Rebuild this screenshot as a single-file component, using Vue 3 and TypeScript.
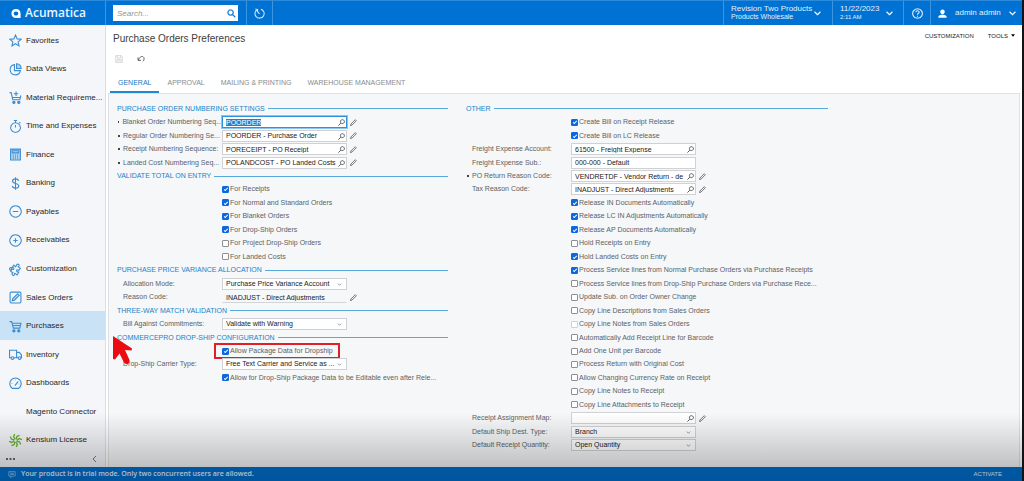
<script setup lang="ts">
import { onMounted, ref } from 'vue'

interface Shape { d: string; fill?: boolean; tint?: boolean }
interface NavItem { label: string; icon: string }
interface Row {
  kind: 'heading' | 'lookup' | 'text' | 'plain' | 'select' | 'check'
  label: string
  value?: string
  required?: boolean
  edit?: boolean
  on?: boolean
  marked?: boolean
  faint?: boolean
  focus?: boolean
}

const icons: Record<string, Shape[]> = {
  star: [{ d: 'M12 2l3 7 7.5.7-5.700 5 1.700 7.300L12 18l-6.500 4 1.700-7.300-5.700-5L9 9z' }],
  pie: [{ d: 'M10 3a9.500 9.500 0 1 0 11 11H10z' }, { d: 'M14 1.500a9 9 0 0 1 8.500 8.500H14z', tint: true }],
  cartPlus: [
    { d: 'M1 3h3l3 13h13l2-8M6 12h15' },
    { d: 'M13 1v8M9 5h8' },
    { d: 'M9 19a2 2 0 1 0 .1 0M18 19a2 2 0 1 0 .1 0', fill: true },
  ],
  watch: [{ d: 'M12 5a9 9 0 1 0 .1 0M12 5V1M9 1h6M12 9v5M19 4l2 2' }],
  calc: [
    { d: 'M3 2h18v20H3z', tint: true },
    { d: 'M6 5h12v4H6zM7 13h2M11 13h2M15 13h2M7 16h2M11 16h2M15 16h2M7 19h2M11 19h2M15 19h2' },
  ],
  dollar: [{ d: 'M18 7c-1-3-3-3.500-6-3.500S6.500 5 6.500 7.500 8 11 12 12s6 2 6 4.500-2.500 4-6 4-5.500-1-6-4M12 .5v23' }],
  minus: [{ d: 'M12 1.500a10.500 10.500 0 1 0 .1 0M7 12h10' }],
  plus: [{ d: 'M12 1.500a10.500 10.500 0 1 0 .1 0' }, { d: 'M12 8v8M8 12h8' }],
  puzzle: [{ d: 'M9 4l3 3c2-1 1-5 4-5s4 4 1 5l4 3-3 4c-1-2-4-2-4 0s2 3 4 3l-3 5-4-3c-2 1 0 4-3 4s-3-4-1-5l-4-3 2-4c2 2 4 1 4-1S7 9 5 9z' }, { d: 'M5 9c-2-1-4 0-4 2s2 3 4 2' }],
  edit: [{ d: 'M4 2h16q2 0 2 2v16q0 2-2 2H4q-2 0-2-2V4q0-2 2-2z' }, { d: 'M6 18l1-4L16 5l3 3-9 9z', tint: true }],
  cart: [
    { d: 'M1 3h4l3 12h12l2-9H6M7 10h14' },
    { d: 'M9 18a2 2 0 1 0 .1 0M18 18a2 2 0 1 0 .1 0', fill: true },
  ],
  truck: [
    { d: 'M4 18H1V4h13v14H9M14 8h5l4 5v5h-1M17 18h-3' },
    { d: 'M6.500 16a2.500 2.500 0 1 0 .1 0M19.500 16a2.500 2.500 0 1 0 .1 0' },
  ],
  gauge: [{ d: 'M6 21a10.500 10.500 0 1 1 12 0zM11 16l6-8M5 12h1M12 5v1M18 13h1' }],
  blank: [],
}

const nav: NavItem[] = [
  { label: 'Favorites', icon: 'star' },
  { label: 'Data Views', icon: 'pie' },
  { label: 'Material Requireme...', icon: 'cartPlus' },
  { label: 'Time and Expenses', icon: 'watch' },
  { label: 'Finance', icon: 'calc' },
  { label: 'Banking', icon: 'dollar' },
  { label: 'Payables', icon: 'minus' },
  { label: 'Receivables', icon: 'plus' },
  { label: 'Customization', icon: 'puzzle' },
  { label: 'Sales Orders', icon: 'edit' },
  { label: 'Purchases', icon: 'cart' },
  { label: 'Inventory', icon: 'truck' },
  { label: 'Dashboards', icon: 'gauge' },
  { label: 'Magento Connector', icon: 'blank' },
  { label: 'Kensium License', icon: 'burst' },
]

const tabs = ['GENERAL', 'APPROVAL', 'MAILING & PRINTING', 'WAREHOUSE MANAGEMENT']

const left: Row[] = [
  { kind: 'heading', label: 'PURCHASE ORDER NUMBERING SETTINGS' },
  { kind: 'lookup', label: 'Blanket Order Numbering Seq...', value: 'POORDER', required: true, edit: true, focus: true },
  { kind: 'lookup', label: 'Regular Order Numbering Se...', value: 'POORDER - Purchase Order', required: true, edit: true },
  { kind: 'lookup', label: 'Receipt Numbering Sequence:', value: 'PORECEIPT - PO Receipt', required: true, edit: true },
  { kind: 'lookup', label: 'Landed Cost Numbering Seq...', value: 'POLANDCOST - PO Landed Costs', required: true, edit: true },
  { kind: 'heading', label: 'VALIDATE TOTAL ON ENTRY' },
  { kind: 'check', label: 'For Receipts', on: true },
  { kind: 'check', label: 'For Normal and Standard Orders', on: true },
  { kind: 'check', label: 'For Blanket Orders', on: true },
  { kind: 'check', label: 'For Drop-Ship Orders', on: true },
  { kind: 'check', label: 'For Project Drop-Ship Orders' },
  { kind: 'check', label: 'For Landed Costs' },
  { kind: 'heading', label: 'PURCHASE PRICE VARIANCE ALLOCATION' },
  { kind: 'select', label: 'Allocation Mode:', value: 'Purchase Price Variance Account' },
  { kind: 'plain', label: 'Reason Code:', value: 'INADJUST - Direct Adjustments', edit: true },
  { kind: 'heading', label: 'THREE-WAY MATCH VALIDATION' },
  { kind: 'select', label: 'Bill Against Commitments:', value: 'Validate with Warning' },
  { kind: 'heading', label: 'COMMERCEPRO DROP-SHIP CONFIGURATION' },
  { kind: 'check', label: 'Allow Package Data for Dropship', on: true, marked: true },
  { kind: 'select', label: 'Drop-Ship Carrier Type:', value: 'Free Text Carrier and Service as ...' },
  { kind: 'check', label: 'Allow for Drop-Ship Package Data to be Editable even after Rele...', on: true },
]

const right: Row[] = [
  { kind: 'heading', label: 'OTHER' },
  { kind: 'check', label: 'Create Bill on Receipt Release', on: true },
  { kind: 'check', label: 'Create Bill on LC Release', on: true },
  { kind: 'lookup', label: 'Freight Expense Account:', value: '61500 - Freight Expense' },
  { kind: 'text', label: 'Freight Expense Sub.:', value: '000-000 - Default' },
  { kind: 'lookup', label: 'PO Return Reason Code:', value: 'VENDRETDF - Vendor Return - de', required: true, edit: true },
  { kind: 'lookup', label: 'Tax Reason Code:', value: 'INADJUST - Direct Adjustments', edit: true },
  { kind: 'check', label: 'Release IN Documents Automatically', on: true },
  { kind: 'check', label: 'Release LC IN Adjustments Automatically', on: true },
  { kind: 'check', label: 'Release AP Documents Automatically', on: true },
  { kind: 'check', label: 'Hold Receipts on Entry' },
  { kind: 'check', label: 'Hold Landed Costs on Entry', on: true },
  { kind: 'check', label: 'Process Service lines from Normal Purchase Orders via Purchase Receipts', on: true },
  { kind: 'check', label: 'Process Service lines from Drop-Ship Purchase Orders via Purchase Rece...' },
  { kind: 'check', label: 'Update Sub. on Order Owner Change' },
  { kind: 'check', label: 'Copy Line Descriptions from Sales Orders' },
  { kind: 'check', label: 'Copy Line Notes from Sales Orders', faint: true },
  { kind: 'check', label: 'Automatically Add Receipt Line for Barcode' },
  { kind: 'check', label: 'Add One Unit per Barcode' },
  { kind: 'check', label: 'Process Return with Original Cost' },
  { kind: 'check', label: 'Allow Changing Currency Rate on Receipt' },
  { kind: 'check', label: 'Copy Line Notes to Receipt' },
  { kind: 'check', label: 'Copy Line Attachments to Receipt' },
  { kind: 'lookup', label: 'Receipt Assignment Map:', value: '', edit: true },
  { kind: 'select', label: 'Default Ship Dest. Type:', value: 'Branch' },
  { kind: 'select', label: 'Default Receipt Quantity:', value: 'Open Quantity' },
]

const columns = [left, right]
const root = ref<HTMLElement | null>(null)

onMounted(() => {
  const field = root.value?.querySelector<HTMLInputElement>('.field.focus')
  field?.focus()
  field?.select()
})
</script>

<template>
  <div ref="root" class="app">
    <header class="top">
      <a class="brand" href="#">
        <svg class="mark" viewBox="0 0 24 24"><path fill="#fff" fill-rule="evenodd" d="M12 1C5 1 1 6 1 12s4 11 11 11h11V12C23 6 19 1 12 1zm0 6c3.500 0 5.500 2 5.500 5s-2 5-5.500 5-5.500-2-5.500-5 2-5 5.500-5z" /></svg>
        <span>Acumatica</span>
      </a>
      <div class="search">
        <input type="text" placeholder="Search..." aria-label="Search" />
        <svg viewBox="0 0 24 24"><path d="M9.500 2.500a7 7 0 1 0 .1 0M15 15l7 7" fill="none" stroke="#1c7fd6" stroke-width="3.500" /></svg>
      </div>
      <button class="history" aria-label="Recent">
        <svg viewBox="0 0 24 24"><path d="M7 3.500A10 10 0 1 0 15 2.500M8 8l4 5M3 2l5 1.500L7 9" fill="none" stroke="#d8ebfb" stroke-width="2.200" /></svg>
      </button>
      <div class="fill"></div>
      <button class="tenant">
        <span class="two"><span class="big">Revision Two Products</span><span class="mid">Products Wholesale</span></span>
        <svg class="chev" viewBox="0 0 12 8"><path d="M1 1l5 5 5-5" /></svg>
      </button>
      <button class="date">
        <span class="two"><span class="big">11/22/2023</span><span class="small">2:11 AM</span></span>
        <svg class="chev" viewBox="0 0 12 8"><path d="M1 1l5 5 5-5" /></svg>
      </button>
      <button class="help" aria-label="Help">
        <svg viewBox="0 0 24 24"><path d="M12 1.500a10.500 10.500 0 1 0 .1 0M8.500 9.500c0-4.500 7-4.500 7-.5 0 3-3.500 2.500-3.500 5.500M12 17v2" fill="none" stroke="#e4f1fc" stroke-width="2.400" /></svg>
      </button>
      <button class="user">
        <svg class="person" viewBox="0 0 24 24"><path d="M12 1c4 0 6 3 6 6.500S15 14 12 14 6 11 6 7.500 8 1 12 1zM1 23v-3c1-4 6-5 11-5s10 1 11 5v3z" fill="#fff" /></svg>
        <span class="big">admin admin</span>
        <svg class="chev" viewBox="0 0 12 8"><path d="M1 1l5 5 5-5" /></svg>
      </button>
    </header>

    <div class="body">
      <aside class="side">
        <nav>
          <a v-for="item in nav" :key="item.label" href="#" :class="{ active: item.label === 'Purchases' }">
            <svg v-if="item.icon === 'burst'" viewBox="0 0 24 24" class="burst">
              <path
                v-for="n in 8"
                :key="n"
                d="M12 9.500L8.500 5 10.500 0"
                :transform="`rotate(${n * 45} 12 12)`"
              />
            </svg>
            <svg v-else viewBox="0 0 24 24">
              <path v-for="s in icons[item.icon]" :key="s.d" :d="s.d" :class="{ solid: s.fill, tint: s.tint }" />
            </svg>
            <span>{{ item.label }}</span>
          </a>
        </nav>
        <div class="side-end">
          <button aria-label="More"><svg class="dots" viewBox="0 0 9 2"><path d="M0 0h2v2H0zM3.500 0h2v2h-2zM7 0h2v2H7z" /></svg></button>
          <button aria-label="Collapse"><svg class="back" viewBox="0 0 5 8"><path d="M4 1L1 4l3 3" /></svg></button>
        </div>
      </aside>

      <main class="main">
        <div class="title">
          <h1>Purchase Orders Preferences</h1>
          <div class="links">
            <button>CUSTOMIZATION</button>
            <button>TOOLS <svg viewBox="0 0 8 5"><path d="M0 0h8L4 5z" /></svg></button>
          </div>
        </div>
        <div class="tools">
          <button aria-label="Save" disabled>
            <svg viewBox="0 0 24 24"><path d="M2 2h17l3 3v17H2zM6 2v7h11V2M6 22v-9h12v9M9 17h6" fill="none" stroke="#c9c9cb" stroke-width="2" /></svg>
          </button>
          <button aria-label="Undo">
            <svg viewBox="0 0 24 24"><path d="M4 15C9 5 14 3 18 5c5 3 4 10 0 14M3 7v9h9" fill="none" stroke="#4a4a4c" stroke-width="2.500" /></svg>
          </button>
        </div>
        <div class="tabs" role="tablist">
          <button v-for="(t, i) in tabs" :key="t" role="tab" :aria-selected="i === 0" :class="{ current: i === 0 }">{{ t }}</button>
        </div>
        <form class="panel" @submit.prevent>
          <div v-for="(rows, c) in columns" :key="c" class="column" :class="{ second: c === 1 }">
            <div v-for="(row, r) in rows" :key="r" class="row">
              <h2 v-if="row.kind === 'heading'">{{ row.label }}</h2>
              <template v-else-if="row.kind === 'check'">
                <label class="check" :class="{ marked: row.marked }">
                  <input type="checkbox" :checked="row.on" :class="{ faint: row.faint }" />
                  <span>{{ row.label }}</span>
                </label>
              </template>
              <template v-else>
                <label class="name" :class="{ required: row.required }" :for="`f${c}-${r}`">{{ row.label }}</label>
                <span class="control">
                  <select v-if="row.kind === 'select'" :id="`f${c}-${r}`" class="field">
                    <option>{{ row.value }}</option>
                  </select>
                  <input v-else :id="`f${c}-${r}`" type="text" class="field" :class="[row.kind, { focus: row.focus }]" :value="row.value" />
                  <svg v-if="row.kind === 'select'" class="down" viewBox="0 0 12 8"><path d="M1.500 1.500L6 6l4.500-4.500" /></svg>
                  <svg v-if="row.kind === 'lookup'" class="glass" viewBox="0 0 16 16"><path d="M10 1.500a4.500 4.500 0 1 0 .1 0M6.500 9.500L1 15" /></svg>
                </span>
                <button v-if="row.edit" type="button" class="pencil" aria-label="Edit">
                  <svg viewBox="0 0 16 16"><path d="M1 15l1-3.500L12 1.500l2.500 2.500-10 10z" /></svg>
                </button>
              </template>
            </div>
          </div>
        </form>
      </main>
    </div>

    <footer class="trial">
      <svg viewBox="0 0 24 22"><path d="M2 2h20v14H12l-4 5v-5H2zM6 7h12M6 11h12" /></svg>
      <span>Your product is in trial mode. Only two concurrent users are allowed.</span>
      <a href="#">ACTIVATE</a>
    </footer>

    <div class="shade"></div>
    <svg class="pointer" viewBox="0 0 21 31"><path d="M1 1L20 13.500 19.500 15.500 13 15 17.500 25C18.500 28.500 14 30.500 12 27.500L7.500 18.500 3 24.500 1 24z" /></svg>
  </div>
</template>

<style>
body {
  margin: 0;
}
</style>

<style scoped>
.app {
  position: relative;
  display: flex;
  flex-direction: column;
  min-height: 100vh;
  box-sizing: border-box;
  border-right: 2px solid #111417;
  background: #fff;
  color: #3d3e41;
  font-family: "Liberation Sans", Arial, sans-serif;
  font-size: 7px;
  line-height: 10px;
  overflow: hidden;
}
button,
input,
select {
  font: inherit;
  color: inherit;
  margin: 0;
  padding: 0;
  border: 0;
  background: none;
}
a {
  color: inherit;
  text-decoration: none;
}
svg {
  display: block;
  flex: none;
}

.top {
  display: flex;
  height: 25px;
  box-sizing: border-box;
  border-top: 1px solid #2e8bdc;
  background: #0072d3;
  color: #e4f1fc;
}
.brand {
  display: flex;
  align-items: center;
  gap: 4px;
  width: 105px;
  box-sizing: border-box;
  padding-left: 11px;
  color: #eef6fd;
  font-family: "Open Sans", "Noto Sans", sans-serif;
  font-size: 12px;
  font-weight: 600;
}
.mark {
  width: 10px;
  height: 11px;
}
.search {
  position: relative;
  display: flex;
  align-items: center;
  width: 141px;
  box-sizing: border-box;
  padding: 0 8px 0 7px;
  border-left: 1px solid #3f96e0;
}
.search input {
  width: 100%;
  height: 16px;
  box-sizing: border-box;
  padding: 0 16px 0 4px;
  background: #fff;
  color: #444;
  font-size: 8px;
}
.search input::placeholder {
  color: #939393;
  font-style: italic;
  opacity: 1;
}
.search svg {
  position: absolute;
  right: 10px;
  width: 9px;
  height: 9px;
}
.top button {
  display: flex;
  align-items: center;
  box-sizing: border-box;
  border-left: 1px solid #3f96e0;
  text-align: left;
}
.top .history {
  justify-content: center;
  width: 27px;
  border-right: 1px solid #3f96e0;
}
.history svg,
.help svg {
  width: 11px;
  height: 11px;
}
.fill {
  flex: 1;
}
.tenant,
.date {
  gap: 5px;
  padding-left: 7px;
}
.top .tenant {
  width: 109px;
  gap: 2px;
}
.top .date {
  width: 71px;
  gap: 7px;
}
.top .help {
  justify-content: center;
  width: 27px;
}
.top .user {
  width: 92px;
  gap: 8px;
  padding-left: 7px;
}
.two {
  display: flex;
  flex-direction: column;
  line-height: 8px;
}
.big {
  font-size: 8px;
  white-space: nowrap;
}
.mid {
  font-size: 7px;
}
.small {
  font-size: 6px;
}
.person {
  width: 9px;
  height: 9px;
}
.chev {
  width: 7px;
  height: 5px;
  fill: none;
  stroke: #fff;
  stroke-width: 2;
}

.body {
  display: flex;
  flex: 1;
}
.side {
  display: flex;
  flex-direction: column;
  width: 105px;
  background: #f4f6f9;
}
nav {
  display: flex;
  flex: 1;
  flex-direction: column;
  padding-top: 1px;
}
nav a {
  display: flex;
  flex: 1;
  align-items: center;
  gap: 4px;
  padding: 1px 0 0 9px;
  color: #27282b;
  font-size: 8px;
  white-space: nowrap;
}
nav a.active {
  background: #c9e2f6;
}
nav svg {
  width: 13px;
  height: 13px;
  fill: none;
  stroke: #3a8dd2;
  stroke-width: 2;
}
nav .solid {
  fill: #3a8dd2;
}
nav .tint {
  fill: #b5d6f0;
}
nav .burst {
  stroke: #64b32c;
  stroke-width: 2.4;
}
.side-end {
  display: flex;
  align-items: flex-start;
  justify-content: space-between;
  height: 13px;
  padding: 0 8px 0 6px;
}
.side-end button {
  display: flex;
  align-items: center;
  height: 10px;
}
.dots {
  width: 9px;
  height: 2px;
  fill: #66686b;
}
.back {
  width: 5px;
  height: 8px;
  fill: none;
  stroke: #77797c;
}

.main {
  display: flex;
  flex: 1;
  flex-direction: column;
  min-width: 0;
  border-left: 1px solid #dcdee1;
  background: #fff;
}
.title {
  display: flex;
  justify-content: space-between;
  height: 23px;
  padding: 0 7px;
}
h1 {
  margin: 0;
  font-size: 10px;
  font-weight: 400;
  line-height: 27px;
}
.links {
  display: flex;
  align-items: center;
  gap: 14px;
  padding-bottom: 2px;
}
.links button {
  display: flex;
  align-items: center;
  gap: 3px;
  color: #222;
  font-size: 6px;
}
.links svg {
  width: 4px;
  height: 3px;
}
.tools {
  display: flex;
  align-items: center;
  gap: 14px;
  height: 22px;
  padding: 0 9px;
}
.tools svg {
  width: 8px;
  height: 8px;
}
.tabs {
  display: flex;
  padding: 5px 4px 0;
}
.tabs button {
  height: 18px;
  padding: 0 8px;
  border-bottom: 2px solid transparent;
  color: #8a8b8d;
  font-size: 7px;
}
.tabs .current {
  border-color: #2087d1;
  color: #1779c4;
}
.panel {
  display: flex;
  flex: 1;
  gap: 18px;
  margin: 0 2px;
  padding: 8px;
  padding-bottom: 15px;
  border: 1px solid #dfe1e4;
  border-bottom: 0;
  background: #f5f7f9;
}
.column {
  display: grid;
  grid-template-rows: repeat(26, minmax(12px, 1fr));
  width: 331px;
}
.second {
  width: 362px;
}
.row {
  display: grid;
  grid-template-columns: 105px 125px 1fr;
  align-items: center;
  min-width: 0;
}
h2 {
  display: flex;
  grid-column: 1 / -1;
  align-items: center;
  gap: 3px;
  margin: 0;
  color: #1c81c8;
  font-size: 7px;
  font-weight: 400;
  white-space: nowrap;
}
h2::after {
  content: "";
  flex: 1;
  height: 1px;
  background: #58aadd;
}
.name {
  display: flex;
  align-items: center;
  gap: 3px;
  padding-left: 6px;
  color: #606164;
  white-space: nowrap;
}
.required {
  padding-left: 1px;
}
.required::before {
  content: "";
  width: 2px;
  height: 2px;
  background: #444;
}
.control {
  position: relative;
  display: flex;
}
.field {
  width: 100%;
  height: 12px;
  box-sizing: border-box;
  padding: 0 10px 0 3px;
  border: 1px solid #cfd1d4;
  background: #fff;
  color: #18191b;
  line-height: 10px;
  appearance: none;
  border-radius: 0;
  outline: none;
}
.plain {
  border-color: transparent transparent #d3d5d8;
  background: transparent;
}
.focus {
  border-color: #2d92dd;
  box-shadow: 0 0 0 1px #8cc5ee;
  caret-color: transparent;
}
.focus::selection {
  background: #267fc9;
  color: #fff;
}
.down,
.glass {
  position: absolute;
  pointer-events: none;
  fill: none;
}
.down {
  top: 5px;
  right: 5px;
  width: 5px;
  height: 3px;
  stroke: #77797c;
  stroke-width: 2;
}
.glass {
  top: 3px;
  right: 2px;
  width: 7px;
  height: 7px;
  stroke: #444547;
  stroke-width: 2;
}
.pencil {
  width: 7px;
  margin-left: 3px;
}
.pencil svg {
  width: 7px;
  height: 7px;
  fill: none;
  stroke: #66686b;
  stroke-width: 2;
}
.check {
  position: relative;
  display: flex;
  grid-column: 2 / -1;
  align-items: center;
  justify-self: start;
  gap: 1px;
  color: #606164;
  white-space: nowrap;
}
.check input {
  display: grid;
  place-items: center;
  flex: none;
  width: 7px;
  height: 7px;
  box-sizing: border-box;
  border: 1px solid #8d8f92;
  border-radius: 1px;
  background: #fff;
  appearance: none;
}
.check input.faint {
  border-color: #cfd1d4;
}
.check input:checked {
  border-color: #0d67df;
  background: #0d67df;
}
.check input:checked::after {
  content: "";
  width: 4px;
  height: 2px;
  box-sizing: border-box;
  border: solid #fff;
  border-width: 0 0 1px 1px;
  transform: rotate(-45deg);
}
.marked::after {
  content: "";
  position: absolute;
  inset: -3px -7px -3px -8px;
  border: 2px solid #e01f26;
}

.trial {
  display: flex;
  align-items: center;
  gap: 5px;
  height: 14px;
  padding: 0 20px 0 8px;
  background: #0070cf;
  color: #eaf4ff;
}
.trial span {
  font-family: "Open Sans", "Noto Sans", sans-serif;
  font-weight: 600;
}
.trial svg {
  width: 8px;
  height: 7px;
  fill: none;
  stroke: #a9d3f7;
  stroke-width: 2;
}
.trial a {
  margin-left: auto;
  font-size: 6px;
}
.shade {
  position: absolute;
  right: 0;
  bottom: 0;
  left: 0;
  height: 68px;
  background: linear-gradient(rgba(0, 0, 0, 0), rgba(0, 0, 0, 0.22) 54px, rgba(0, 0, 0, 0.24));
  pointer-events: none;
}
.pointer {
  position: absolute;
  top: 335px;
  left: 112px;
  width: 21px;
  height: 31px;
  fill: #ea0c10;
}
</style>
